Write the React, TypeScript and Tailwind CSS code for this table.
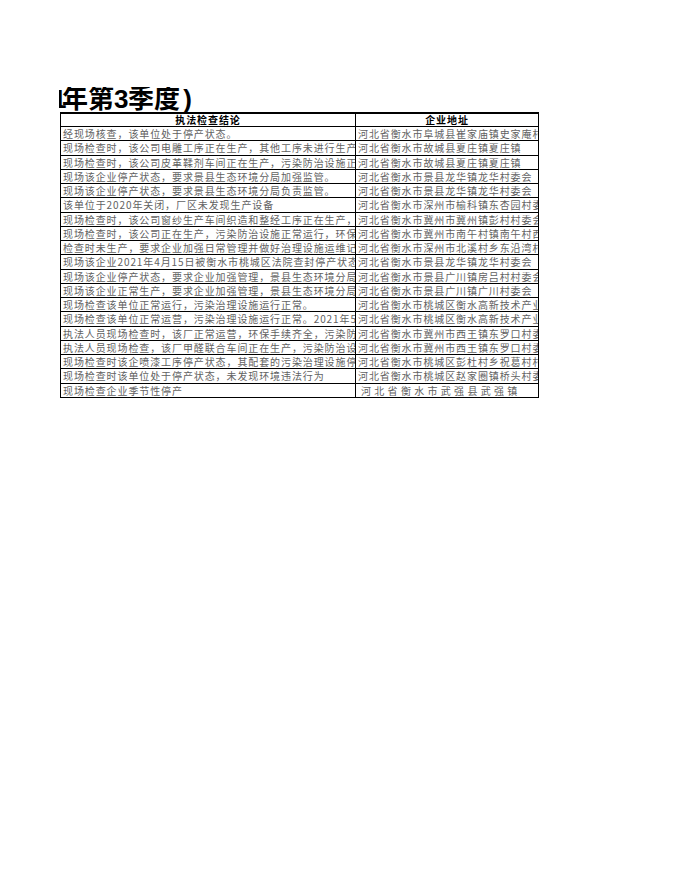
const rows: [string, string][] = [
  ['经现场核查，该单位处于停产状态。', '河北省衡水市阜城县崔家庙镇史家庵村委会'],
  ['现场检查时，该公司电雕工序正在生产，其他工序未进行生产', '河北省衡水市故城县夏庄镇夏庄镇'],
  ['现场检查时，该公司皮革鞣剂车间正在生产，污染防治设施正常运行', '河北省衡水市故城县夏庄镇夏庄镇'],
  ['现场该企业停产状态，要求景县生态环境分局加强监管。', '河北省衡水市景县龙华镇龙华村委会'],
  ['现场该企业停产状态，要求景县生态环境分局负责监管。', '河北省衡水市景县龙华镇龙华村委会'],
  ['该单位于2020年关闭，厂区未发现生产设备', '河北省衡水市深州市榆科镇东杏园村委会'],
  ['现场检查时，该公司窗纱生产车间织造和整经工序正在生产，污染防治设施正常运行', '河北省衡水市冀州市冀州镇彭村村委会'],
  ['现场检查时，该公司正在生产，污染防治设施正常运行，环保手续齐全', '河北省衡水市冀州市南午村镇南午村西'],
  ['检查时未生产，要求企业加强日常管理并做好治理设施运维记录', '河北省衡水市深州市北溪村乡东沿湾村委会'],
  ['现场该企业2021年4月15日被衡水市桃城区法院查封停产状态', '河北省衡水市景县龙华镇龙华村委会'],
  ['现场该企业停产状态，要求企业加强管理，景县生态环境分局负责监管', '河北省衡水市景县广川镇房吕村村委会'],
  ['现场该企业正常生产，要求企业加强管理，景县生态环境分局负责监管', '河北省衡水市景县广川镇广川村委会'],
  ['现场检查该单位正常运行，污染治理设施运行正常。', '河北省衡水市桃城区衡水高新技术产业开发区'],
  ['现场检查该单位正常运营，污染治理设施运行正常。2021年5月', '河北省衡水市桃城区衡水高新技术产业开发区'],
  ['执法人员现场检查时，该厂正常运营，环保手续齐全，污染防治设施正常运行', '河北省衡水市冀州市西王镇东罗口村委会'],
  ['执法人员现场检查，该厂甲醛联合车间正在生产，污染防治设施正常运行', '河北省衡水市冀州市西王镇东罗口村委会'],
  ['现场检查时该企喷漆工序停产状态，其配套的污染治理设施停运', '河北省衡水市桃城区彭杜村乡祝葛村村委会'],
  ['现场检查时该单位处于停产状态，未发现环境违法行为', '河北省衡水市桃城区赵家圈镇桥头村委会'],
  ['现场检查企业季节性停产', '河北省衡水市武强县武强镇'],
];

const font = { fontFamily: '"Noto Sans CJK SC", sans-serif' };

export default function App() {
  return (
    <div className="min-h-[880px] w-[680px] bg-white pl-[60px] pt-[87px]" style={font}>
      <div
        className="-ml-[1px] h-[25px] overflow-hidden whitespace-nowrap text-[26px] font-bold leading-[25px] text-black"
        style={{ fontFamily: '"Liberation Sans", "Noto Sans CJK SC", sans-serif' }}
      >
        <span className="-ml-[7px] mr-[-4.5px] inline-block">1</span>
        <span>年第</span>
        <span className="inline-block w-[14px]">3</span>
        <span>季度</span>
        <span className="inline-block w-[15px] text-center">)</span>
      </div>

      <div className="w-[479px] border-x border-t-2 border-black">
        <div className="flex h-[13px] border-b border-black text-[10px] font-bold leading-[12px] tracking-[0.9px] text-black">
          <div className="flex w-[295px] items-center justify-center border-r border-black">执法检查结论</div>
          <div className="flex flex-1 items-center justify-center">企业地址</div>
        </div>
        {rows.map(([result, addr], i) => (
          <div key={i} className="flex h-[14.25px] border-b border-black text-[10px] leading-[13px] text-[#626262]">
            <div className="w-[295px] overflow-hidden whitespace-nowrap border-r border-black pl-[2px] tracking-[0.9px]">
              {result}
            </div>
            <div
              className={
                i === rows.length - 1
                  ? 'flex-1 overflow-hidden whitespace-nowrap pl-[5px] tracking-[3.3px]'
                  : 'flex-1 overflow-hidden whitespace-nowrap pl-[2px] tracking-[0.9px]'
              }
            >
              {addr}
            </div>
          </div>
        ))}
      </div>
    </div>
  );
}
